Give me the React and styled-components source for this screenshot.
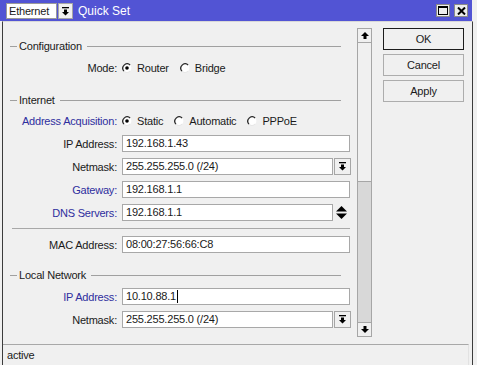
import React from "react";
import styled, { createGlobalStyle } from "styled-components";

const GlobalStyle = createGlobalStyle`
  html, body { margin: 0; padding: 0; background: #f0f0f0; }
  body {
    font-family: "Liberation Sans", Arial, sans-serif;
    font-size: 11px;
    letter-spacing: -0.2px;
    color: #1a1a1a;
    overflow: hidden;
  }
  * { box-sizing: border-box; }
`;

const Window = styled.div`
  width: 477px;
  height: 365px;
  background: #f0f0f0;
  display: flex;
  flex-direction: column;
`;

const TitleBar = styled.div`
  width: 472px;
  height: 21px;
  flex: none;
  background: #5254d4;
  display: flex;
  align-items: center;
  padding: 0 4px 0 6px;
`;

const IfaceBox = styled.div`
  display: flex;
  height: 16px;
  margin-top: 1px;
`;

const IfaceValue = styled.div`
  width: 51px;
  height: 16px;
  background: #fff;
  border: 1px solid #9a9a9a;
  padding-left: 2px;
  line-height: 14px;
  font-size: 11px;
`;

const DropBtn = styled.div`
  width: ${(p) => p.$w || 17}px;
  height: ${(p) => p.$h || 17}px;
  margin-left: ${(p) => p.$gap ?? 1}px;
  background: #f0f0f0;
  border: 1px solid #a6a6a6;
  display: flex;
  align-items: center;
  justify-content: center;
  flex: none;
`;

const Title = styled.div`
  margin-left: 5px;
  color: #fff;
  font-size: 12px;
  letter-spacing: 0;
  flex: 1;
`;

const TitleBtn = styled.div`
  width: 14px;
  height: 13px;
  margin-left: ${(p) => p.$ml || 0}px;
  background: #ececec;
  border: 1px solid #8a8a8a;
  display: flex;
  align-items: center;
  justify-content: center;
`;

const Body = styled.div`
  margin-left: 2px;
  width: 471px;
  flex: 1;
  border-left: 1px solid #3c3c3c;
  border-right: 1px solid #3c3c3c;
  border-top: 1px solid #d8d8d8;
  display: flex;
  flex-direction: column;
`;

const Main = styled.div`
  height: 321px;
  display: flex;
  flex: none;
`;

const Form = styled.div`
  width: 350px;
  padding-top: 17px;
  display: flex;
  flex-direction: column;
`;

const SectionHead = styled.div`
  height: 14px;
  margin-top: ${(p) => p.$mt || 0}px;
  display: flex;
  align-items: center;
  &::before {
    content: "";
    width: 7px;
    height: 1px;
    margin-left: 7px;
    margin-right: 2px;
    background: #a0a0a0;
  }
  &::after {
    content: "";
    flex: 1;
    height: 1px;
    margin-left: 5px;
    margin-right: 12px;
    background: #a0a0a0;
  }
`;

const Row = styled.div`
  display: flex;
  align-items: center;
  height: ${(p) => p.$h || 17}px;
  margin-top: ${(p) => p.$mt || 0}px;
`;

const Label = styled.div`
  width: 114px;
  flex: none;
  text-align: right;
  margin-right: 5px;
  color: ${(p) => (p.$blue ? "#2e2e9e" : "#1a1a1a")};
  white-space: nowrap;
`;

const Field = styled.div`
  width: ${(p) => p.$w || 228}px;
  height: 17px;
  flex: none;
  background: #fff;
  border: 1px solid #a8a8a8;
  padding-left: 3px;
  line-height: 15px;
  white-space: nowrap;
  display: flex;
  align-items: center;
`;

const Caret = styled.span`
  display: inline-block;
  width: 1px;
  height: 13px;
  margin-left: 1px;
  background: #000;
`;

const Spin = styled.div`
  width: 17px;
  height: 17px;
  display: flex;
  align-items: center;
  justify-content: center;
`;

const Options = styled.div`
  display: flex;
  align-items: center;
  gap: 11px;
`;

const Option = styled.div`
  display: flex;
  align-items: center;
  gap: 5px;
`;

const Separator = styled.div`
  height: 1px;
  width: 338px;
  margin: 7px 0 0 9px;
  background: #a8a8a8;
`;

const Scrollbar = styled.div`
  width: 15px;
  height: 309px;
  margin: 6px 0 0 4px;
  display: flex;
  flex-direction: column;
  flex: none;
`;

const ScrollBtn = styled.div`
  height: 15px;
  flex: none;
  background: #f0f0f0;
  border: 1px solid #a6a6a6;
  display: flex;
  align-items: center;
  justify-content: center;
`;

const Thumb = styled.div`
  height: 139px;
  flex: none;
  background: #f0f0f0;
  border: 1px solid #a6a6a6;
  border-top: none;
`;

const Track = styled.div`
  flex: 1;
  background: #d8d8d8;
  border-left: 1px solid #a6a6a6;
  border-right: 1px solid #a6a6a6;
`;

const ButtonColumn = styled.div`
  width: 81px;
  margin: 6px 0 0 11px;
  display: flex;
  flex-direction: column;
  gap: 4px;
`;

const Button = styled.div`
  height: 22px;
  border: 1px solid ${(p) => (p.$default ? "#1c1c1c" : "#adadad")};
  background: #f0f0f0;
  display: flex;
  align-items: center;
  justify-content: center;
  font-size: 11px;
`;

const StatusBar = styled.div`
  height: 22px;
  width: 466px;
  margin-top: 1px;
  border-top: 1px solid #a8a8a8;
  border-right: 1px solid #e2e2e2;
  padding-left: 4px;
  line-height: 20px;
`;

const DropIcon = () => (
  <svg width="9" height="9" viewBox="0 0 9 9">
    <rect x="1" y="0" width="7" height="1.3" fill="#000" />
    <path d="M3 2.5 H6 V5 H8 L4.5 8.5 L1 5 H3 Z" fill="#000" />
  </svg>
);

const ArrowUp = () => (
  <svg width="8" height="7" viewBox="0 0 8 7">
    <path d="M4 0 L8 4 H5.5 V7 H2.5 V4 H0 Z" fill="#000" />
  </svg>
);

const ArrowDown = () => (
  <svg width="8" height="7" viewBox="0 0 8 7">
    <path d="M2.5 0 H5.5 V3 H8 L4 7 L0 3 H2.5 Z" fill="#000" />
  </svg>
);

const SpinIcon = () => (
  <svg width="11" height="13" viewBox="0 0 11 13">
    <path d="M5.5 0 L11 5.5 H0 Z" fill="#000" />
    <path d="M0 7.5 H11 L5.5 13 Z" fill="#000" />
  </svg>
);

const MaxIcon = () => (
  <svg width="10" height="9" viewBox="0 0 10 9">
    <rect x="0.5" y="0.5" width="9" height="8" fill="none" stroke="#000" />
    <rect x="0" y="0" width="10" height="2" fill="#000" />
  </svg>
);

const CloseIcon = () => (
  <svg width="9" height="8" viewBox="0 0 9 8">
    <path d="M1 0.5 L8 7.5 M8 0.5 L1 7.5" stroke="#000" strokeWidth="2" />
  </svg>
);

const Radio = ({ checked }) => (
  <svg width="10" height="10" viewBox="0 0 10 10" style={{ flex: "none" }}>
    <circle cx="5" cy="5" r="4.4" fill="#fff" />
    <path d="M8.1 8.1 A4.4 4.4 0 0 1 1.9 8.1" stroke="#e6e6e6" strokeWidth="1.1" fill="none" />
    <path d="M1.9 8.1 A4.4 4.4 0 0 1 8.1 1.9" stroke="#2a2a2a" strokeWidth="1.3" fill="none" />
    {checked && <circle cx="5" cy="5" r="1.8" fill="#000" />}
  </svg>
);

const RadioGroup = ({ options, value }) => (
  <Options>
    {options.map((o) => (
      <Option key={o}>
        <Radio checked={o === value} />
        <span>{o}</span>
      </Option>
    ))}
  </Options>
);

export default function App() {
  return (
    <>
      <GlobalStyle />
      <Window>
        <TitleBar>
          <IfaceBox>
            <IfaceValue>Ethernet</IfaceValue>
            <DropBtn $w={15} $h={16} $gap={1}>
              <DropIcon />
            </DropBtn>
          </IfaceBox>
          <Title>Quick Set</Title>
          <TitleBtn>
            <MaxIcon />
          </TitleBtn>
          <TitleBtn $ml={4}>
            <CloseIcon />
          </TitleBtn>
        </TitleBar>
        <Body>
          <Main>
            <Form>
              <SectionHead>Configuration</SectionHead>
              <Row $h={18} $mt={6}>
                <Label>Mode:</Label>
                <RadioGroup options={["Router", "Bridge"]} value="Router" />
              </Row>
              <SectionHead $mt={16}>Internet</SectionHead>
              <Row $h={18} $mt={5}>
                <Label $blue>Address Acquisition:</Label>
                <RadioGroup options={["Static", "Automatic", "PPPoE"]} value="Static" />
              </Row>
              <Row $mt={5}>
                <Label>IP Address:</Label>
                <Field>192.168.1.43</Field>
              </Row>
              <Row $mt={6}>
                <Label>Netmask:</Label>
                <Field $w={211}>255.255.255.0 (/24)</Field>
                <DropBtn>
                  <DropIcon />
                </DropBtn>
              </Row>
              <Row $mt={6}>
                <Label $blue>Gateway:</Label>
                <Field>192.168.1.1</Field>
              </Row>
              <Row $mt={6}>
                <Label $blue>DNS Servers:</Label>
                <Field $w={211}>192.168.1.1</Field>
                <Spin>
                  <SpinIcon />
                </Spin>
              </Row>
              <Separator />
              <Row $mt={7}>
                <Label>MAC Address:</Label>
                <Field>08:00:27:56:66:C8</Field>
              </Row>
              <SectionHead $mt={15}>Local Network</SectionHead>
              <Row $mt={6}>
                <Label $blue>IP Address:</Label>
                <Field>
                  10.10.88.1
                  <Caret />
                </Field>
              </Row>
              <Row $mt={6}>
                <Label>Netmask:</Label>
                <Field $w={211}>255.255.255.0 (/24)</Field>
                <DropBtn>
                  <DropIcon />
                </DropBtn>
              </Row>
            </Form>
            <Scrollbar>
              <ScrollBtn>
                <ArrowUp />
              </ScrollBtn>
              <Thumb />
              <Track />
              <ScrollBtn>
                <ArrowDown />
              </ScrollBtn>
            </Scrollbar>
            <ButtonColumn>
              <Button $default>OK</Button>
              <Button>Cancel</Button>
              <Button>Apply</Button>
            </ButtonColumn>
          </Main>
          <StatusBar>active</StatusBar>
        </Body>
      </Window>
    </>
  );
}
